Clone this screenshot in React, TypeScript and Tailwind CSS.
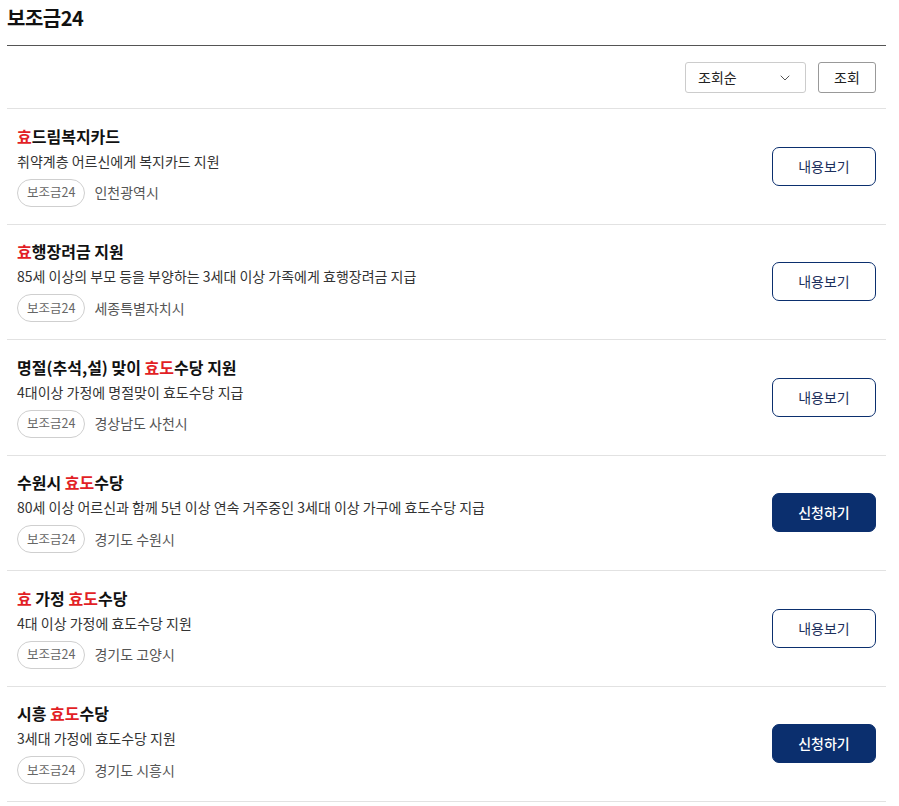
import { ChevronDown } from "lucide-react";

type Part = { text: string; red?: boolean };

type Item = {
  title: Part[];
  desc: string;
  tag: string;
  region: string;
  apply?: boolean;
};

const items: Item[] = [
  {
    title: [{ text: "효", red: true }, { text: "드림복지카드" }],
    desc: "취약계층 어르신에게 복지카드 지원",
    tag: "보조금24",
    region: "인천광역시",
  },
  {
    title: [{ text: "효", red: true }, { text: "행장려금 지원" }],
    desc: "85세 이상의 부모 등을 부양하는 3세대 이상 가족에게 효행장려금 지급",
    tag: "보조금24",
    region: "세종특별자치시",
  },
  {
    title: [
      { text: "명절(추석,설) 맞이 " },
      { text: "효도", red: true },
      { text: "수당 지원" },
    ],
    desc: "4대이상 가정에 명절맞이 효도수당 지급",
    tag: "보조금24",
    region: "경상남도 사천시",
  },
  {
    title: [{ text: "수원시 " }, { text: "효도", red: true }, { text: "수당" }],
    desc: "80세 이상 어르신과 함께 5년 이상 연속 거주중인 3세대 이상 가구에 효도수당 지급",
    tag: "보조금24",
    region: "경기도 수원시",
    apply: true,
  },
  {
    title: [
      { text: "효", red: true },
      { text: " 가정 " },
      { text: "효도", red: true },
      { text: "수당" },
    ],
    desc: "4대 이상 가정에 효도수당 지원",
    tag: "보조금24",
    region: "경기도 고양시",
  },
  {
    title: [{ text: "시흥 " }, { text: "효도", red: true }, { text: "수당" }],
    desc: "3세대 가정에 효도수당 지원",
    tag: "보조금24",
    region: "경기도 시흥시",
    apply: true,
  },
];

function Row({ item }: { item: Item }) {
  return (
    <li className="flex h-[115.5px] items-center justify-between border-b border-[#e2e2e2] pl-[10px] pr-[10px]">
      <div className="flex flex-col">
        <p className="text-[16px] font-bold leading-[20px] text-[#111]">
          {item.title.map((p, i) => (
            <span key={i} className={p.red ? "text-[#e21f26]" : ""}>
              {p.text}
            </span>
          ))}
        </p>
        <p className="mt-[4px] text-[14px] leading-[22px] text-[#333]">
          {item.desc}
        </p>
        <div className="mt-[7px] flex items-center gap-[9px]">
          <span className="flex h-[28px] items-center rounded-full border border-[#cfcfcf] px-[9px] text-[12.5px] text-[#666]">
            {item.tag}
          </span>
          <span className="text-[14px] text-[#555]">{item.region}</span>
        </div>
      </div>
      {item.apply ? (
        <button className="h-[39px] w-[104px] rounded-[7px] border border-[#0b2f6e] bg-[#0b2f6e] text-[14px] font-medium text-white">
          신청하기
        </button>
      ) : (
        <button className="h-[39px] w-[104px] rounded-[7px] border border-[#0b2f6e] bg-white text-[14px] text-[#1c2f5c]">
          내용보기
        </button>
      )}
    </li>
  );
}

export default function App() {
  return (
    <div
      className="min-h-[806px] w-[899px] bg-white"
      style={{ fontFamily: '"Noto Sans CJK KR", "Noto Sans", sans-serif' }}
    >
      <div className="ml-[7px] w-[879px]">
        {/* 타이틀 */}
        <div className="flex h-[46px] items-start border-b border-[#555]">
          <h2 className="mt-[4px] text-[20px] font-bold leading-[28px] text-[#111] tracking-[-0.5px]">
            보조금24
          </h2>
        </div>

        {/* 정렬 */}
        <div className="flex h-[63px] items-center justify-end gap-[12px] border-b border-[#e2e2e2] pr-[10px] pt-[1px]">
          <div className="flex h-[31px] w-[121px] items-center justify-between rounded-[3px] border border-[#ccc] pl-[12px] pr-[12px]">
            <span className="text-[14px] text-[#222]">조회순</span>
            <ChevronDown className="h-[16px] w-[16px] text-[#555]" strokeWidth={1.5} />
          </div>
          <button className="h-[31px] w-[58px] rounded-[3px] border border-[#999] text-[14px] text-[#222]">
            조회
          </button>
        </div>

        {/* 목록 */}
        <ul>
          {items.map((item, i) => (
            <Row key={i} item={item} />
          ))}
        </ul>
      </div>
    </div>
  );
}
